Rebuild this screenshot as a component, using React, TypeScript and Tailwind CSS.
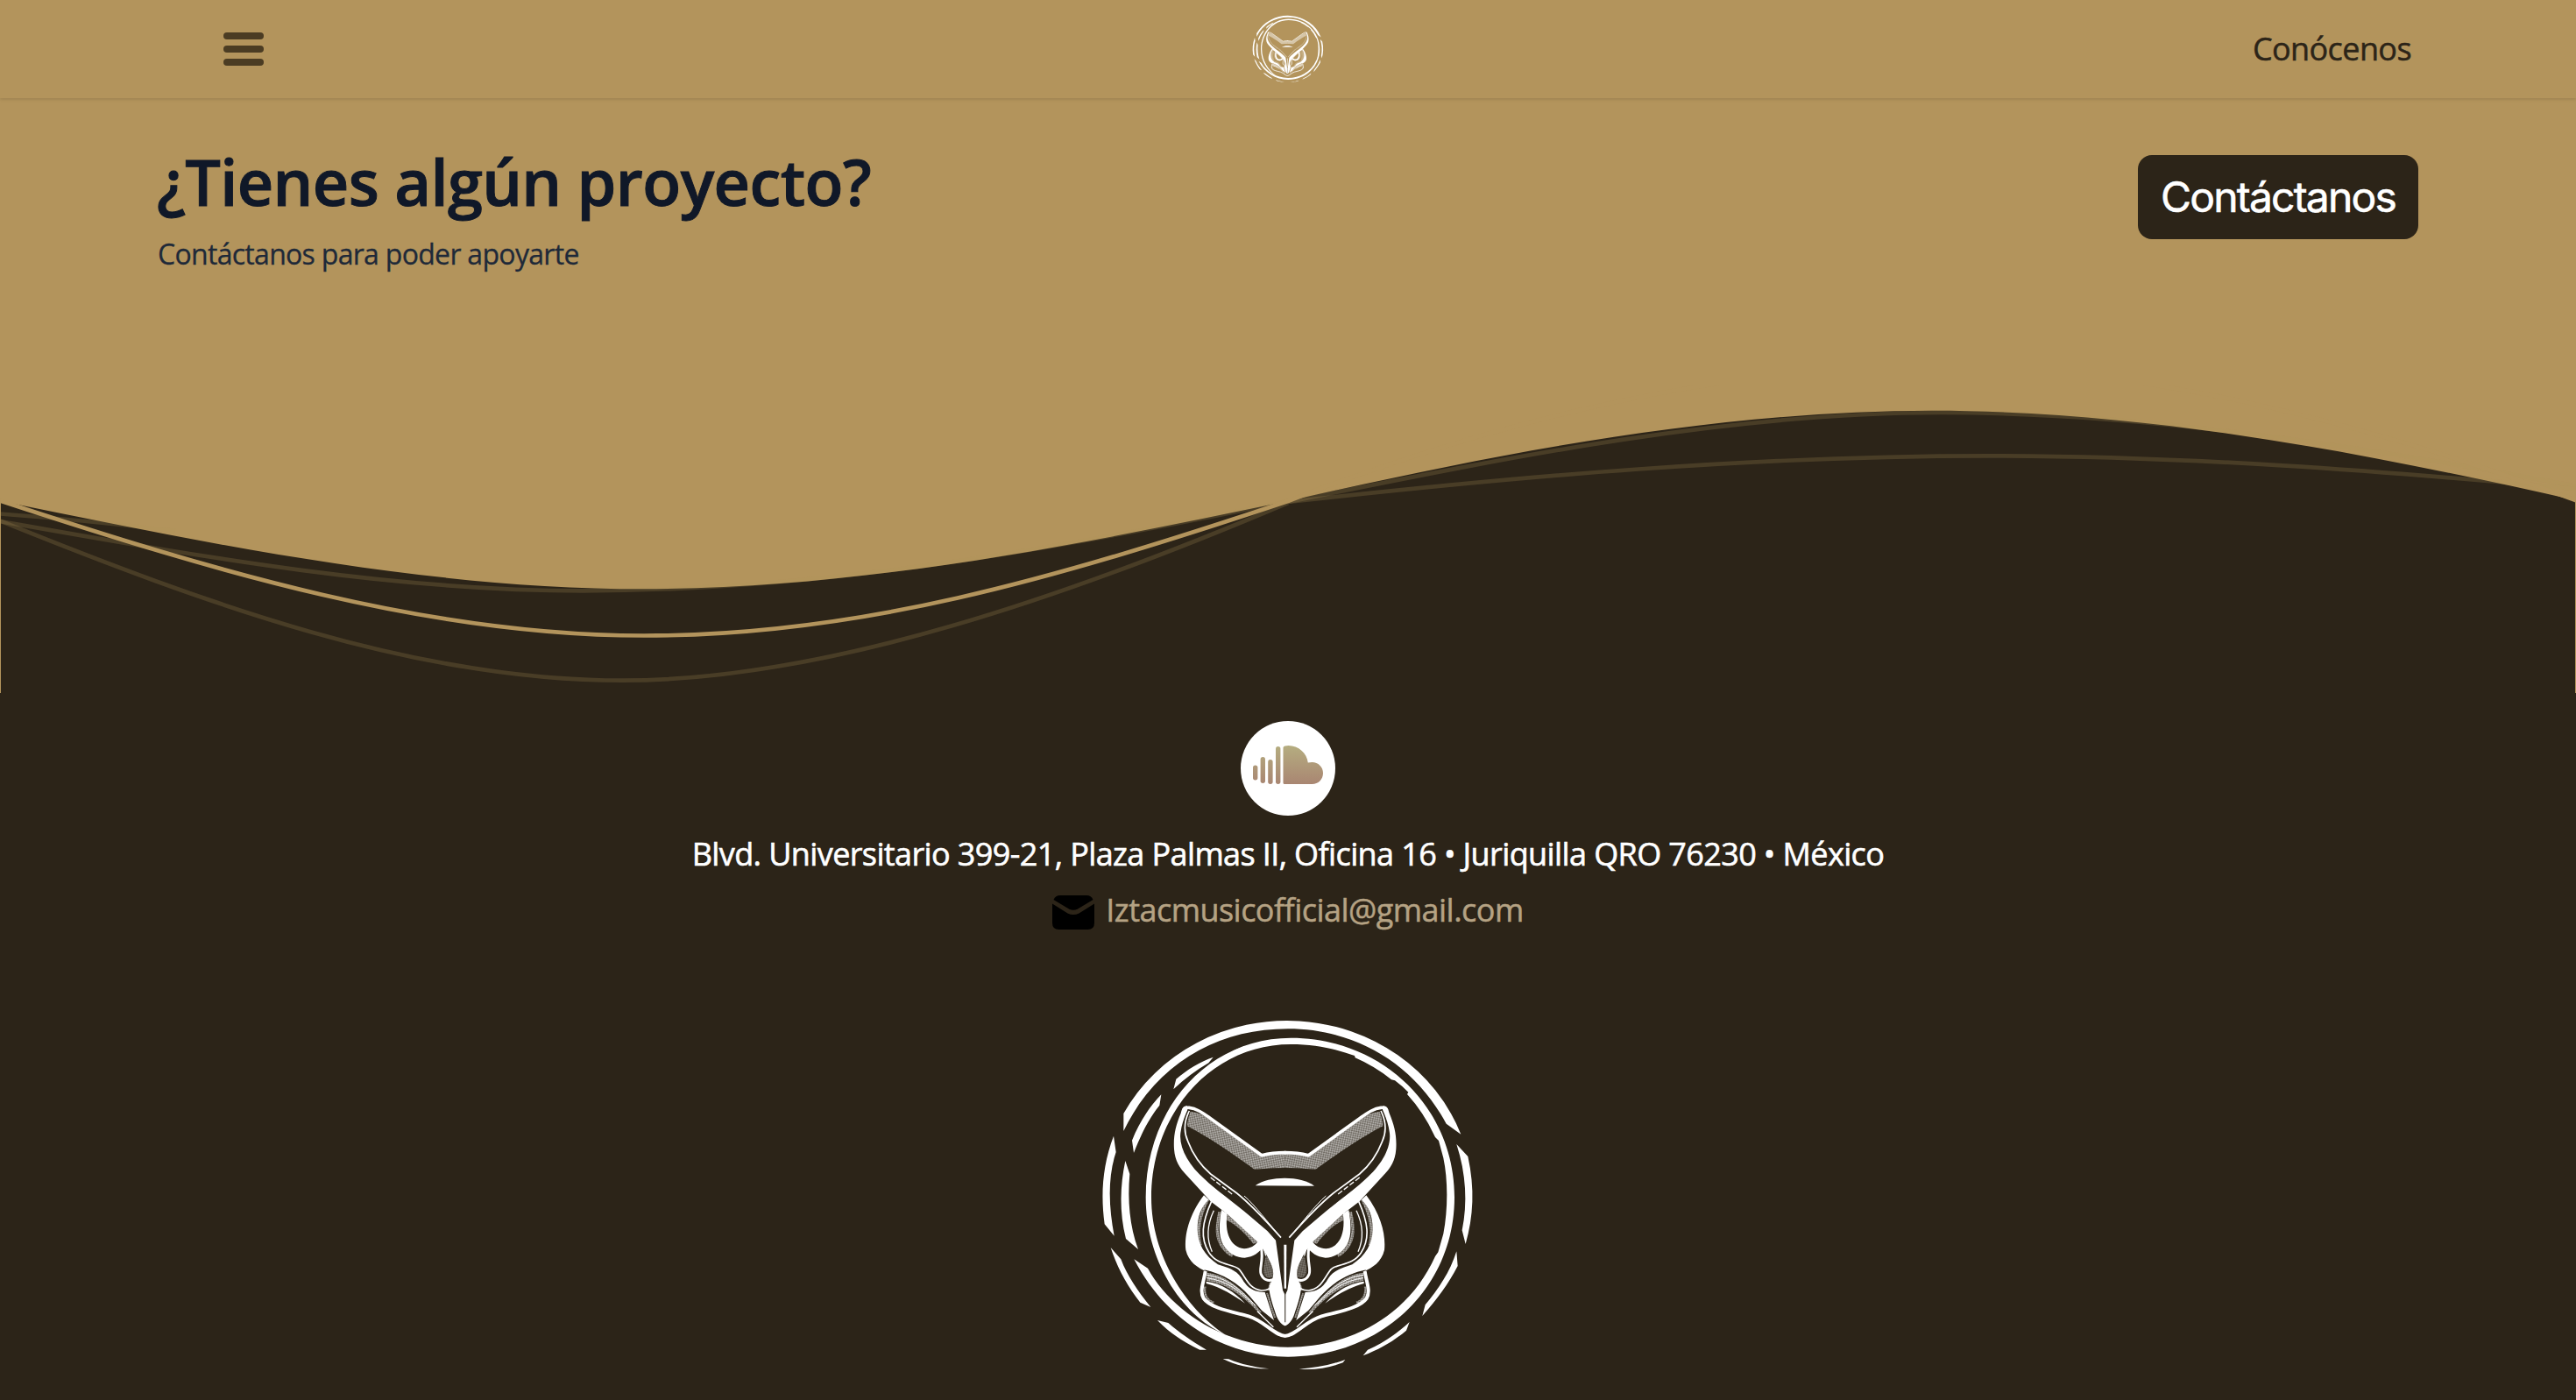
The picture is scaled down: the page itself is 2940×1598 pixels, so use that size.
import { useId } from 'react';

function OwlHalf({ hatch }: { hatch: string }) {
  return (
    <g>
      {/* ear texture */}
      <path fill={hatch} d="M356 356C385 358 405 372 425 386L600 510C630 502 655 500 680 500V549L640 550L575 554C540 530 440 455 345 406C346 388 350 372 356 356Z" />
      {/* ear outline and brow */}
      <path fill="none" stroke="#fff" strokeWidth="11" strokeLinecap="round" strokeLinejoin="round" d="M333 350C337 339 362 341 385 354C400 362 412 371 425 380L600 506C628 499 655 497 681 497" />
      <path fill="none" stroke="#fff" strokeWidth="5" d="M352 354C333 392 334 430 348 460C362 497 385 535 425 570L515 636C560 672 610 725 666 788" />
      <path fill="none" stroke="#fff" strokeWidth="3" d="M540 645C580 680 620 735 664 786" />
      <path fill="none" stroke="#fff" strokeWidth="4" strokeDasharray="18 7" d="M425 582L500 640" />
      <path fill="#fff" d="M345 337C330 336 326 350 323 362C305 405 297 440 300 485C303 525 318 548 345 577L425 664L480 706L585 802C598 820 612 836 625 864C640 892 645 915 632 940C620 960 626 985 650 1055C660 1078 670 1087 681 1090L680 985L672 968L648 797L620 766L562 716C500 664 440 622 405 588C350 540 316 480 322 430C326 398 335 376 346 350Z" />
      {/* eye */}
      <path fill="#fff" d="M462 693C455 735 450 780 468 812C485 842 515 857 542 857C572 855 592 838 606 820L586 802C576 816 562 825 540 826C492 822 472 768 482 706Z" />
      <path fill={hatch} d="M481 708L588 802L572 810C548 778 515 744 480 728Z" />
      <path fill="none" stroke={hatch} strokeWidth="10" d="M456 700C445 750 442 790 468 823C478 836 488 845 500 850" />
      {/* cheek */}
      <path fill="#fff" d="M402 643C350 712 335 780 340 830C350 872 380 890 412 905L402 898C470 912 520 945 558 988L600 1037L642 1071L611 975C562 975 545 950 530 925C512 898 480 890 450 880C405 850 380 810 380 760C380 715 392 685 418 658Z" />
      <path fill="none" stroke={hatch} strokeWidth="10" d="M416 656C382 720 378 770 390 815" />
      <path fill="none" stroke="#fff" strokeWidth="5" d="M428 664C396 735 388 790 420 840C450 885 500 876 522 896C547 925 556 965 600 969C612 969 620 966 628 962" />
      <path fill="none" stroke="#fff" strokeWidth="4" d="M436 695C412 745 412 795 430 836" />
      {/* nostril */}
      <path fill={hatch} d="M614 848C634 872 642 902 638 922C622 932 606 920 606 900C607 880 611 866 614 848Z" opacity="0.6" />
      <path fill="none" stroke="#fff" strokeWidth="9" strokeLinecap="round" d="M599 826C606 870 590 895 598 914C606 932 622 938 638 932" />
      <path fill="none" stroke="#fff" strokeWidth="4" d="M607 822L614 850" />
      <path fill={hatch} d="M628 938L620 968L640 975Z" />
      {/* jaw */}
      <path fill="none" stroke="#fff" strokeWidth="12" d="M407 903C402 940 386 970 401 996C425 1030 500 1042 555 1057C612 1074 640 1122 681 1125" />
      <path fill={hatch} d="M412 908C480 915 535 965 600 1044L590 1046C540 990 480 945 412 936Z" />
      <path fill="none" stroke="#fff" strokeWidth="3" d="M412 916C480 924 530 968 580 1022M412 926C480 936 520 966 570 1016" />
      <path fill="#fff" d="M410 938C465 946 505 972 543 1013C505 986 460 958 410 945Z" />
      <path fill="none" stroke="#fff" strokeWidth="4" d="M585 1040L640 1094" />
      <path fill="none" stroke={hatch} strokeWidth="7" d="M406 955C402 985 415 1005 436 1010" />
      <path fill="none" stroke={hatch} strokeWidth="6" d="M618 978L645 1062" />
    </g>
  );
}

function OwlLogo({ className }: { className: string }) {
  const id = useId();
  const hatch = `url(#${id})`;
  return (
    <svg viewBox="0 0 1380 1290" className={className} role="img" aria-label="Iztac Music">
      <defs>
        <pattern id={id} width="11" height="11" patternUnits="userSpaceOnUse" patternTransform="rotate(33)">
          <rect width="11" height="11" fill="#fff" opacity="0.34" />
          <rect width="5.500" height="5.500" fill="#fff" opacity="0.4" />
          <rect x="5.500" y="5.500" width="5.500" height="5.500" fill="#fff" opacity="0.4" />
        </pattern>
      </defs>
      <g fill="#fff">
        <path d="M127 363A635 600 0 0 1 1282 434L1232 398C1120 190 920 73 690 73C450 73 240 190 127 423Z" />
        <path d="M163 862C270 1070 470 1196 690 1196C1010 1196 1260 960 1260 650C1260 340 1010 104 700 104C420 104 203 340 203 650C203 860 320 1050 475 1120C340 1030 222 850 222 650C222 360 430 126 700 126C785 126 855 142 918 165L920 172A533 524 0 0 1 1044 247L1056 250Q1080 268 1102 290L1098 297Q1156 360 1194 444L1206 456L1222 515C1238 590 1238 690 1222 775L1204 838L1194 852C1100 1060 900 1163 690 1163C480 1163 290 1040 210 893Z" />
        <path d="M93 440L101 495C70 590 78 690 95 782L62 742C48 640 55 540 93 440Z" />
        <path d="M133 525L148 570C140 660 148 750 177 828L135 792C112 700 115 610 133 525Z" />
        <path d="M256 298L250 335C210 385 185 440 162 498L156 455C180 395 215 340 256 298Z" />
        <path d="M434 170L418 190C375 215 335 245 298 280L307 245C345 212 390 185 434 170Z" />
        <path d="M83 822L118 862C140 920 175 970 220 1026L184 1010C140 955 105 890 83 822Z" />
        <path d="M243 1071L280 1080C320 1115 365 1145 411 1172H388C335 1147 285 1115 243 1071Z" />
        <path d="M467 1203L487 1204C530 1222 575 1232 625 1237C565 1238 510 1225 467 1203Z" />
        <path d="M886 1206L878 1216C830 1235 780 1242 728 1238C780 1234 830 1226 886 1206Z" />
        <path d="M1106 1077L1095 1106C1055 1140 1005 1170 947 1192L963 1172C1015 1150 1065 1115 1106 1077Z" />
        <path d="M1267 835L1271 885C1240 945 1200 1000 1150 1056L1160 1018C1205 965 1245 905 1267 835Z" />
        <path d="M1267 468L1306 510C1330 620 1325 715 1298 810L1286 763C1305 670 1300 570 1267 468Z" />
        <path d="M492 155C520 135 560 127 620 122L600 130C560 140 530 150 492 155Z" />
        <path d="M578 610C625 576 735 576 780 611Z" />
        <path d="M676 812L685 812L684 962H677Z" />
      </g>
      <OwlHalf hatch={hatch} />
      <g transform="translate(1360 0) scale(-1 1)">
        <OwlHalf hatch={hatch} />
      </g>
      <path d="M680 965V1078" stroke="#2c2418" strokeOpacity="0.75" strokeWidth="4" />
    </svg>
  );
}

function Waves() {
  return (
    <svg viewBox="0 440 2940 351" className="block h-[351px] w-full">
      <path fill="#2c2418" d="M1 572C245 622 490 672.300 735 672.300S1225 623 1470 572C1715 516 1960 468.800 2205 468.800S2695 516 2939 571V791H1Z" />
      <g fill="none" stroke="#b3945c" strokeWidth="4.700">
        <g strokeOpacity="0.22">
          <path d="M0 594.500C237 690 474 776.700 710 776.700S1225 678 1470 574" />
          <path d="M0 595C222 634 443 674.300 665 674.300C933 674.300 1201 628 1470 572" />
          <path d="M0 586.500Q100 594 200 606" />
          <path d="M1470 573C1718 523 1967 471 2215 471C2450 471 2700 510 2940 555" />
          <path d="M1470 573C1737 543.300 2003 520.300 2270 520.300C2493 520.300 2717 537.300 2940 558" />
        </g>
        <path d="M0 571.500C245 652 490 725.500 735 725.500C980 725.500 1200 662 1470 572L1497 561.500C1715 480 1960 419 2205 419S2695 480 2941 571.500" />
      </g>
    </svg>
  );
}

function SoundCloudIcon() {
  return (
    <svg viewBox="0 0 80 44" className="-mt-[8px] h-[44px] w-[80px]">
      <defs>
        <linearGradient id="cloud" x1="0" y1="0" x2="0" y2="44" gradientUnits="userSpaceOnUse">
          <stop offset="0" stopColor="#b5ad80" />
          <stop offset="1" stopColor="#a98672" />
        </linearGradient>
      </defs>
      <g fill="url(#cloud)">
        <rect x="0" y="22.500" width="5.400" height="17" rx="2.700" />
        <rect x="8.600" y="13" width="5.400" height="30" rx="2.700" />
        <rect x="17.200" y="16" width="5.400" height="28" rx="2.700" />
        <rect x="26" y="1" width="5.400" height="43" rx="2.700" />
        <path d="M34.500 2.500Q34.500 .8 36.500 .4Q38.500 0 40.500 0C52 0 61.500 8.500 62.800 19.600Q65 19 67.500 19C74.500 19 80 24.500 80 31.500S74.500 44 67.500 44H36Q34.500 44 34.500 42.500Z" />
      </g>
    </svg>
  );
}

function MailIcon() {
  return (
    <svg viewBox="0 0 48 39" className="mt-[5px] h-[39px] w-[48px]" fill="#000">
      <path d="M1.500 5Q3.500 0 9 0H39Q44.500 0 46.500 5L29 15.500Q24 18 19 15.500Z" />
      <path d="M0 9.500L17.500 20.500Q24 23.500 30.500 20.500L48 9.500V31.500Q48 39 40.500 39H7.500Q0 39 0 31.500Z" />
    </svg>
  );
}

export default function App() {
  return (
    <div className="flex h-[1598px] w-full flex-col overflow-hidden bg-[#b3945c] font-['Open_Sans','Noto_Sans',sans-serif]">
      <header className="grid h-28 shrink-0 grid-cols-3 items-center pr-[188px] pl-[255px] shadow-[0_2px_3px_rgba(0,0,0,0.1)]">
        <button className="flex w-[46px] flex-col gap-[7px]" aria-label="Menú">
          <span className="h-2 rounded-[4px] bg-[#4b3c23]" />
          <span className="h-2 rounded-[4px] bg-[#4b3c23]" />
          <span className="h-2 rounded-[4px] bg-[#4b3c23]" />
        </button>
        <div className="-ml-[67px] flex justify-center">
          <OwlLogo className="h-[82px] w-[88px]" />
        </div>
        <a className="justify-self-end text-[36px] leading-[56px] tracking-[-0.6px] text-[#2c2418] [-webkit-text-stroke:0.5px_#2c2418]">Conócenos</a>
      </header>

      <section className="flex h-[328px] shrink-0 items-start justify-between px-[180px]">
        <div className="pt-[55px]">
          <h2 className="-ml-[1px] text-[72px] leading-[80px] font-semibold tracking-[-0.59px] text-gray-900 [-webkit-text-stroke:1px_#111827]">
            ¿Tienes algún proyecto?
          </h2>
          <p className="mt-[19px] text-[32px] leading-[48px] tracking-[-0.7px] text-gray-800 [-webkit-text-stroke:0.3px_#1f2937]">Contáctanos para poder apoyarte</p>
        </div>
        <button className="mt-[65px] h-24 w-80 rounded-2xl bg-[#2c2418] font-['Inter',sans-serif] text-[48px] leading-none font-normal tracking-[-1.8px] text-white [-webkit-text-stroke:0.6px_white]">
          Contáctanos
        </button>
      </section>

      <Waves />

      <footer className="flex flex-1 flex-col items-center bg-[#2c2418] pt-8">
        <a className="flex size-[108px] shrink-0 items-center justify-center rounded-full bg-white" aria-label="SoundCloud">
          <SoundCloudIcon />
        </a>
        <p className="mt-4 text-[36px] leading-[56px] tracking-[-0.61px] text-white [-webkit-text-stroke:0.6px_white]">
          Blvd. Universitario 399-21, Plaza Palmas II, Oficina 16 • Juriquilla QRO 76230 • México
        </p>
        <a className="mt-2 flex items-center gap-[13px] text-[36px] leading-[56px] tracking-[-0.53px] text-[#b5a283] [-webkit-text-stroke:0.5px_#b5a283]">
          <MailIcon />
          <span>Iztacmusicofficial@gmail.com</span>
        </a>
        <OwlLogo className="mt-[83px] h-[430px] w-[460px] shrink-0" />
      </footer>
    </div>
  );
}
